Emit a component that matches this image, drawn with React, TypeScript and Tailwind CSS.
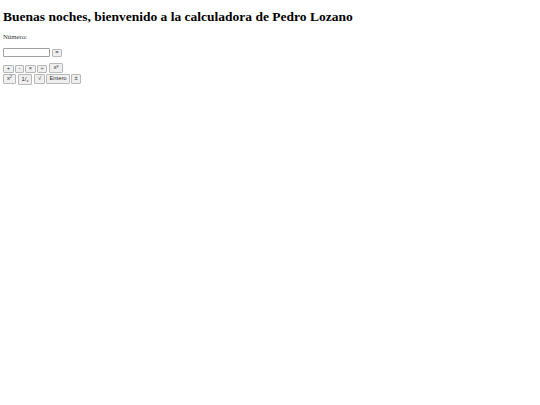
const btn = "flex items-center justify-center rounded-[1px] border border-[#b8b8b8] bg-[#efefef] font-['Liberation_Sans',sans-serif] text-[5.8px] leading-none text-[#333333] opacity-[0.99]";

function B({ className = "", children }: { className?: string; children: React.ReactNode }) {
  return <button className={`${btn} ${className}`}>{children}</button>;
}

export default function App() {
  return (
    <div className="min-h-[405px] w-[540px] bg-white px-[3px] pt-[9px] font-['Liberation_Serif',serif] text-black">
      <h1 className="text-[13.5px] font-bold leading-[15px]">Buenas noches, bienvenido a la calculadora de Pedro Lozano</h1>
      <p className="mt-[9px] text-[6.75px] leading-[8px] text-[#333333] opacity-[0.99]">Número:</p>
      <div className="mt-[7px] flex items-center gap-[1px]">
        <input className="h-[9px] w-[47px] rounded-[1px] border border-[#a0a0a0] bg-white" />
        <B className="ml-[1px] h-[8px] w-[10px]">=</B>
      </div>
      <div className="mt-[6px] flex items-end gap-[1px]">
        <B className="h-[8px] w-[11px]">+</B>
        <B className="h-[8px] w-[9px]">-</B>
        <B className="h-[8px] w-[11px]">×</B>
        <B className="h-[8px] w-[10px]">÷</B>
        <B className="ml-[1px] h-[10px] w-[14px]">x<sup className="text-[4px]">y</sup></B>
      </div>
      <div className="mt-[1px] flex items-start gap-[2px]">
        <B className="h-[10px] w-[13px]">x<sup className="text-[4px]">2</sup></B>
        <B className="h-[11px] w-[14px]">1<span>/</span><sub className="text-[4px]">x</sub></B>
        <B className="h-[10px] w-[11px]">√</B>
        <B className="-ml-[1px] h-[10px] w-[24px]">Entero</B>
        <B className="-ml-[1px] h-[10px] w-[10px]">±</B>
      </div>
    </div>
  );
}
